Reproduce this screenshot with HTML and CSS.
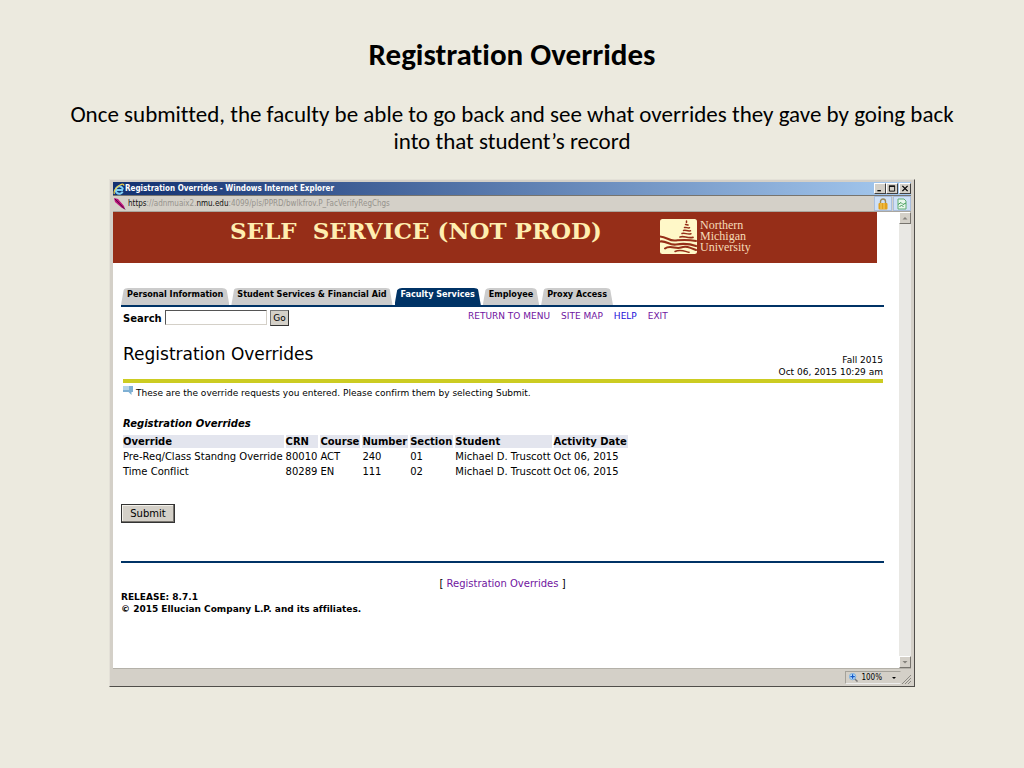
FILE: index.html
```html
<!DOCTYPE html>
<html lang="en">
<head>
<meta charset="utf-8">
<meta name="viewport" content="width=device-width, initial-scale=1">
<title>Registration Overrides</title>
<link rel="stylesheet" href="styles.css">
</head>
<body>
<main class="slide">
  <h1 class="slide-title">Registration Overrides</h1>
  <p class="slide-text">Once submitted, the faculty be able to go back and see what overrides they gave by going back into that student’s record</p>

  <section class="window">
    <header class="titlebar">
      <svg class="ie-icon" viewBox="0 0 12 12" aria-hidden="true"><path d="M10 7H3.5M9.7 8.6A3.7 3.7 0 1 1 10 6.500" fill="none" stroke="#7fd0f5" stroke-width="2"/><path d="M1.500 11C0 9 3 4 7 2c3-1.500 4-.8 3.800.8" fill="none" stroke="#f2d045" stroke-width="1.200"/></svg>
      <span class="caption">Registration Overrides - Windows Internet Explorer</span>
      <button class="win-btn" aria-label="Minimize"><svg viewBox="0 0 8 8"><path d="M1 6.500h4" stroke="#000" stroke-width="1.500"/></svg></button>
      <button class="win-btn" aria-label="Maximize"><svg viewBox="0 0 8 8"><path d="M1 1.500h6v5.500H1z" fill="none" stroke="#000"/><path d="M.5 1.200h7" stroke="#000" stroke-width="1.400"/></svg></button>
      <button class="win-btn win-close" aria-label="Close"><svg viewBox="0 0 8 8"><path d="M1 1l6 6M7 1L1 7" stroke="#000" stroke-width="1.500"/></svg></button>
    </header>

    <div class="address">
      <svg class="pen-icon" viewBox="0 0 12 12" aria-hidden="true"><path d="M0 0l4 1 6 7 1 3-3-1-7-6z" fill="#c0127c"/><path d="M1 1l10 10.500" stroke="#4a0840" stroke-width="1"/></svg>
      <span class="url"><b>https</b>://adnmuaix2.<b>nmu.edu</b>:4099/pls/PPRD/bwlkfrov.P_FacVerifyRegChgs</span>
      <button class="addr-btn" aria-label="Security"><svg viewBox="0 0 12 12"><path d="M3.500 6V3.500a2.500 2.500 0 0 1 5 0V6" fill="none" stroke="#9a8a5a" stroke-width="1.400"/><rect x="1.500" y="5" width="9" height="6.500" rx="1" fill="#e2a01c"/><path d="M4 5v6M7 5v6" stroke="#f6cf62"/></svg></button>
      <button class="addr-btn" aria-label="Compatibility view"><svg viewBox="0 0 12 12"><path d="M2 1h6l2 2v8H2z" fill="#e9f7ec" stroke="#5fae72"/><path d="M2 6.500l3-2 2 2 3-1.500M3.500 8.500l2-1 2 1" fill="none" stroke="#3f9a56"/></svg></button>
    </div>

    <div class="viewport">
      <div class="page">
        <div class="banner">
          <div class="banner-title">SELF&nbsp; SERVICE (NOT PROD)</div>
          <div class="brand">
            <svg class="brand-mark" viewBox="0 0 37 35" aria-hidden="true">
              <rect width="37" height="35" rx="2.500" fill="#fff8c8"/>
              <g fill="none" stroke="#962e18" stroke-linecap="round">
                <path d="M26.500 2v1.500M25.500 5.500l2.500.6M24.500 8.500c2-.5 3 .8 5 .3M23.500 11.500c2-.8 4 1 7 .3M22 14.500c3-1 5 1.300 9 .3" stroke-width="1.500"/>
                <path d="M20 18c4-1.500 7 1.500 13 .3" stroke-width="1.700"/>
                <path d="M0 17.500c7 .5 9 4.500 15 4s11-1.500 21 .5" stroke-width="2"/>
                <path d="M0 22.500c7-1 9 4 16 3s13-1 20 1.500" stroke-width="2.200"/>
                <path d="M5 29.500c5-4 11 1 16-1s9 0 15 2.500" stroke-width="2"/>
                <path d="M15 32.500c5-2.500 9-.5 14 .8" stroke-width="1.500"/>
              </g>
            </svg>
            <div class="brand-name"><span>Northern</span><span>Michigan</span><span>University</span></div>
          </div>
        </div>

        <div class="content">
          <nav class="tabs">
            <a class="tab" href="#">Personal Information</a>
            <a class="tab" href="#">Student Services &amp; Financial Aid</a>
            <a class="tab tab-active" href="#">Faculty Services</a>
            <a class="tab" href="#">Employee</a>
            <a class="tab" href="#">Proxy Access</a>
          </nav>

          <div class="tools">
            <form class="search">
              <label for="q">Search</label>
              <input id="q" type="text">
              <button class="go" type="button">Go</button>
            </form>
            <div class="links">
              <a href="#">RETURN TO MENU</a>
              <a href="#">SITE MAP</a>
              <a class="fresh" href="#">HELP</a>
              <a href="#">EXIT</a>
            </div>
          </div>

          <div class="heading">
            <h2>Registration Overrides</h2>
            <div class="stamp">Fall 2015<br>Oct 06, 2015 10:29 am</div>
          </div>

          <p class="info"><svg class="info-icon" viewBox="0 0 10 9" aria-hidden="true"><path d="M0 0h10v6H8.500v3L5.500 6H0z" fill="#7fb0d4"/><path d="M0 0h6v4H0z" fill="#b4d3e8"/></svg>These are the override requests you entered. Please confirm them by selecting Submit.</p>

          <table class="overrides">
            <caption>Registration Overrides</caption>
            <thead>
              <tr><th>Override</th><th>CRN</th><th>Course</th><th>Number</th><th>Section</th><th>Student</th><th>Activity Date</th></tr>
            </thead>
            <tbody>
              <tr><td>Pre-Req/Class Standng Override</td><td>80010</td><td>ACT</td><td>240</td><td>01</td><td>Michael D. Truscott</td><td>Oct 06, 2015</td></tr>
              <tr><td>Time Conflict</td><td>80289</td><td>EN</td><td>111</td><td>02</td><td>Michael D. Truscott</td><td>Oct 06, 2015</td></tr>
            </tbody>
          </table>

          <button class="submit" type="button">Submit</button>

          <footer class="foot">
            <div class="foot-link">[ <a href="#">Registration Overrides</a> ]</div>
            <div class="release">RELEASE: 8.7.1<br>© 2015 Ellucian Company L.P. and its affiliates.</div>
          </footer>
        </div>
      </div>

      <div class="scrollbar">
        <button class="scroll-btn" aria-label="Scroll up"><svg viewBox="0 0 8 8"><path d="M1.500 5.500L4 3l2.500 2.500z" fill="#85827c"/></svg></button>
        <button class="scroll-btn" aria-label="Scroll down"><svg viewBox="0 0 8 8"><path d="M1.500 3L4 5.500 6.500 3z" fill="#85827c"/></svg></button>
      </div>
    </div>

    <div class="status">
      <button class="zoom-level"><svg class="lens" viewBox="0 0 10 10" aria-hidden="true"><path d="M6 6l3.500 3.500" stroke="#777" stroke-width="1.600"/><circle cx="4" cy="4" r="3.500" fill="#bfe0fa" stroke="#6fa8e0"/><path d="M4 1.500v5M1.500 4h5" stroke="#1458c8" stroke-width="1.400"/></svg><span>100%</span><svg class="arrow" viewBox="0 0 6 4" aria-hidden="true"><path d="M1 1h4L3 3z"/></svg></button>
      <svg class="grip" viewBox="0 0 10 10" aria-hidden="true"><path d="M1 10l9-9M4 10l6-6M7 10l3-3" stroke="#8c8a84"/></svg>
    </div>
  </section>
</main>
</body>
</html>
```

FILE: styles.css
```css
* { box-sizing: border-box; }

body {
  margin: 0;
  min-height: 100vh;
  background: #eceadf;
  color: #000;
  font-family: "DejaVu Sans", Verdana, sans-serif;
  font-variant-ligatures: none;
}

button { padding: 0; font-family: inherit; color: inherit; }
svg { display: block; flex: none; }
a { text-decoration: none; }

.slide { padding: 36px 62px 80px; }

.slide-title {
  margin: 0;
  font-family: Carlito, Calibri, Lato, sans-serif;
  font-weight: bold;
  font-size: 31px;
  line-height: 36px;
  text-align: center;
}

.slide-text {
  margin: 29px 0 24px;
  font-family: Carlito, Calibri, Lato, sans-serif;
  font-size: 23px;
  line-height: 27px;
  text-align: center;
}

.window {
  margin: 0 47px;
  padding: 2px 3px;
  background: #d4d0c8;
  border: 1px solid #e4e1d8;
  border-right: 1px solid #504e4a;
  border-bottom: 1px solid #504e4a;
}

.titlebar {
  display: flex;
  align-items: center;
  height: 13px;
  background: linear-gradient(90deg, #123070, #a6caf0);
}

.ie-icon { width: 12px; height: 12px; }

.caption {
  flex: 1;
  color: #fff;
  font-weight: bold;
  font-size: 8px;
  line-height: 12px;
  font-family: "DejaVu Sans Condensed", "DejaVu Sans", sans-serif;
  white-space: nowrap;
}

.win-btn {
  width: 12px;
  height: 11px;
  padding: 1px;
  background: #d4d0c8;
  border: 1px solid;
  border-color: #fff #404040 #404040 #fff;
}

.win-btn svg { width: 8px; height: 7px; }
.win-close { margin-left: 1px; }

.address {
  display: flex;
  align-items: center;
  height: 17px;
  border-top: 1px solid #77746e;
  border-bottom: 1px solid #aaa69e;
}

.pen-icon { width: 12px; height: 12px; margin: 0 2px 0 1px; }

.url {
  flex: 1;
  color: #96938d;
  font-size: 8px;
  line-height: 12px;
  font-family: "DejaVu Sans Condensed", "DejaVu Sans", sans-serif;
  white-space: nowrap;
}

.url b { color: #111; font-weight: normal; }

.addr-btn {
  display: flex;
  align-items: center;
  justify-content: center;
  width: 18px;
  height: 15px;
  margin-left: 1px;
  background: #cfe0f6;
  border: 1px solid #a9bedc;
}

.addr-btn svg { width: 12px; height: 12px; }

.viewport { display: flex; min-height: 456px; background: #fff; }
.page { flex: 1; min-width: 0; }

.banner {
  display: flex;
  height: 51px;
  margin-right: 22px;
  padding-left: 117px;
  background: #962e18;
}

.banner-title {
  width: 430px;
  padding-top: 6px;
  color: #ffeeb0;
  font-weight: bold;
  font-size: 23px;
  line-height: 26px;
  font-family: "DejaVu Serif", serif;
  white-space: nowrap;
}

.brand { display: flex; gap: 3px; padding-top: 7px; }
.brand-mark { width: 37px; height: 35px; }

.brand-name {
  display: flex;
  flex-direction: column;
  padding-top: 1px;
  color: #f6dcb8;
  font-size: 12px;
  line-height: 11px;
  font-family: "Liberation Serif", serif;
}

.content { padding: 25px 15px 0 8px; }

.tabs { display: flex; gap: 2px; border-bottom: 2px solid #003366; }

.tab {
  position: relative;
  z-index: 0;
  height: 17px;
  padding: 0 6px;
  color: #000;
  font-weight: bold;
  font-size: 9px;
  line-height: 13px;
  font-family: "DejaVu Sans Condensed", "DejaVu Sans", sans-serif;
  white-space: nowrap;
}

.tab::before {
  content: "";
  position: absolute;
  inset: 0;
  z-index: -1;
  background: #ccc;
  border-radius: 7px 7px 0 0;
  clip-path: polygon(3px 0, calc(100% - 3px) 0, 100% 100%, 0 100%);
}

.tab-active { color: #fff; }
.tab-active::before { background: #003366; }

.tools { display: flex; height: 20px; padding: 3px 0 0 2px; }
.search { display: flex; width: 345px; }

.search label { width: 42px; font-weight: bold; font-size: 10px; line-height: 18px; }

.search input {
  width: 102px;
  height: 15px;
  padding: 0 2px;
  border: 1px solid;
  border-color: #555 #d4d0c8 #d4d0c8 #555;
  font-size: 9px;
}

.go {
  width: 19px;
  height: 16px;
  margin-left: 3px;
  background: #d4d0c8;
  border: 1px solid;
  border-color: #777 #333 #333 #777;
  font-size: 9px;
  line-height: 12px;
}

.links { display: flex; gap: 11px; font-size: 9px; line-height: 12px; white-space: nowrap; }
.links a, .foot a { color: #7014a0; }
.links .fresh { color: #1a10d8; }

.heading {
  display: flex;
  justify-content: space-between;
  align-items: flex-end;
  margin: 17px 1px 0 2px;
  padding-bottom: 1px;
  border-bottom: 4px solid #cccc22;
}

.heading h2 { margin: 0 0 14px; font-size: 17px; line-height: 20px; font-weight: normal; }
.stamp { font-size: 9px; line-height: 12px; text-align: right; }

.info { display: flex; gap: 3px; margin: 3px 0 0 2px; font-size: 9px; line-height: 14px; }
.info-icon { width: 10px; height: 9px; }

.overrides { margin: 17px 0 0; border-spacing: 2px; font-size: 10px; line-height: 13px; text-align: left; white-space: nowrap; }
.overrides caption { padding: 0 2px 3px; font-weight: bold; font-style: italic; text-align: left; }
.overrides th, .overrides td { padding: 0 1px 0 0; }
.overrides th { background: #e3e5ee; }

.submit {
  display: block;
  width: 54px;
  height: 19px;
  margin-top: 24px;
  background: #d4d0c8;
  border: 1px solid #333;
  box-shadow: inset -1px -1px #77746e, inset 1px 1px #f4f2ec;
  font-size: 10px;
}

.foot { margin-top: 38px; border-top: 2px solid #003366; }
.foot-link { padding-top: 14px; font-size: 10px; line-height: 14px; text-align: center; }
.release { font-weight: bold; font-size: 9px; line-height: 12px; }

.scrollbar {
  display: flex;
  flex-direction: column;
  justify-content: space-between;
  width: 12px;
  background: #e9e8e4;
}

.scroll-btn {
  width: 12px;
  height: 12px;
  padding: 1px;
  background: #d4d0c8;
  border: 1px solid;
  border-color: #fff #77746e #77746e #fff;
}

.scroll-btn svg { width: 8px; height: 8px; }

.status {
  display: flex;
  justify-content: flex-end;
  align-items: flex-end;
  padding-top: 2px;
  border-top: 1px solid #b4b1a9;
}

.zoom-level {
  display: flex;
  align-items: center;
  gap: 3px;
  height: 13px;
  padding: 0 3px;
  background: none;
  border: 1px solid;
  border-color: #a5a29a transparent #eee #a5a29a;
  font-size: 8px;
  line-height: 11px;
  font-family: "DejaVu Sans Condensed", "DejaVu Sans", sans-serif;
}

.lens { width: 9px; height: 9px; }
.arrow { width: 6px; height: 4px; margin-left: 6px; }
.grip { width: 10px; height: 10px; }
```
